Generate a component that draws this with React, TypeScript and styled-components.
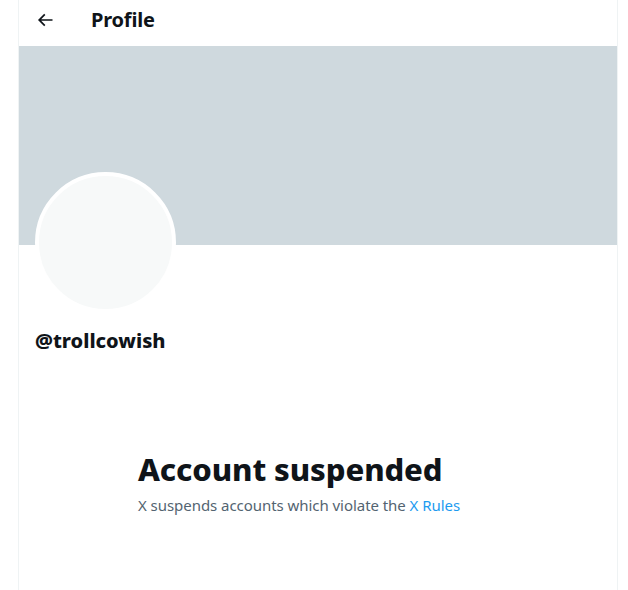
import React from "react";
import styled, { createGlobalStyle } from "styled-components";

const GlobalStyle = createGlobalStyle`
  html, body { margin: 0; padding: 0; background: #ffffff; }
  body {
    font-family: "Noto Sans", "Inter", "Liberation Sans", sans-serif;
    color: #0f1419;
    -webkit-font-smoothing: antialiased;
  }
  * { box-sizing: border-box; }
`;

const Column = styled.main`
  width: 600px;
  min-height: 100vh;
  margin-left: 18px;
  border-left: 1px solid #eff3f4;
  border-right: 1px solid #eff3f4;
  display: flex;
  flex-direction: column;
`;

const Header = styled.header`
  height: 46px;
  padding: 0 16px 7px;
  display: flex;
  align-items: center;
`;

const BackButton = styled.button`
  width: 56px;
  height: 36px;
  flex-shrink: 0;
  padding: 0;
  border: none;
  background: transparent;
  color: #0f1419;
  display: flex;
  align-items: center;
  justify-content: flex-start;
  cursor: pointer;
`;

const Title = styled.h2`
  margin: 0;
  font-size: 20px;
  line-height: 24px;
  font-weight: 700;
  letter-spacing: -0.2px;
  color: #0f1419;
`;

const Banner = styled.div`
  height: 199px;
  background: #cfd9de;
`;

const ProfileInfo = styled.section`
  padding: 0 16px;
  display: flex;
  flex-direction: column;
  align-items: flex-start;
`;

const Avatar = styled.div`
  width: 141px;
  height: 141px;
  margin-top: -73px;
  border-radius: 50%;
  border: 4px solid #ffffff;
  background: #f7f9f9;
`;

const Handle = styled.div`
  margin-top: 16px;
  font-size: 20px;
  line-height: 24px;
  font-weight: 800;
  color: #0f1419;
`;

const EmptyState = styled.section`
  width: 360px;
  margin: 98px auto 0;
  display: flex;
  flex-direction: column;
`;

const EmptyTitle = styled.h1`
  margin: 0 0 8px;
  font-size: 31px;
  line-height: 36px;
  font-weight: 800;
  letter-spacing: -0.1px;
  color: #0f1419;
`;

const EmptyText = styled.p`
  margin: 0;
  font-size: 15px;
  line-height: 20px;
  font-weight: 400;
  letter-spacing: -0.05px;
  color: #536471;
`;

const Link = styled.a`
  color: #1d9bf0;
  text-decoration: none;
`;

const BackArrow = () => (
  <svg width="20" height="20" viewBox="0 0 24 24" fill="currentColor" aria-hidden="true">
    <path d="M7.414 13l5.043 5.04-1.414 1.42L3.586 12l7.457-7.46 1.414 1.42L7.414 11H21v2H7.414z" />
  </svg>
);

export default function App() {
  return (
    <>
      <GlobalStyle />
      <Column>
        <Header>
          <BackButton aria-label="Back">
            <BackArrow />
          </BackButton>
          <Title>Profile</Title>
        </Header>
        <Banner />
        <ProfileInfo>
          <Avatar />
          <Handle>@trollcowish</Handle>
        </ProfileInfo>
        <EmptyState>
          <EmptyTitle>Account suspended</EmptyTitle>
          <EmptyText>
            X suspends accounts which violate the <Link href="#">X Rules</Link>
          </EmptyText>
        </EmptyState>
      </Column>
    </>
  );
}
